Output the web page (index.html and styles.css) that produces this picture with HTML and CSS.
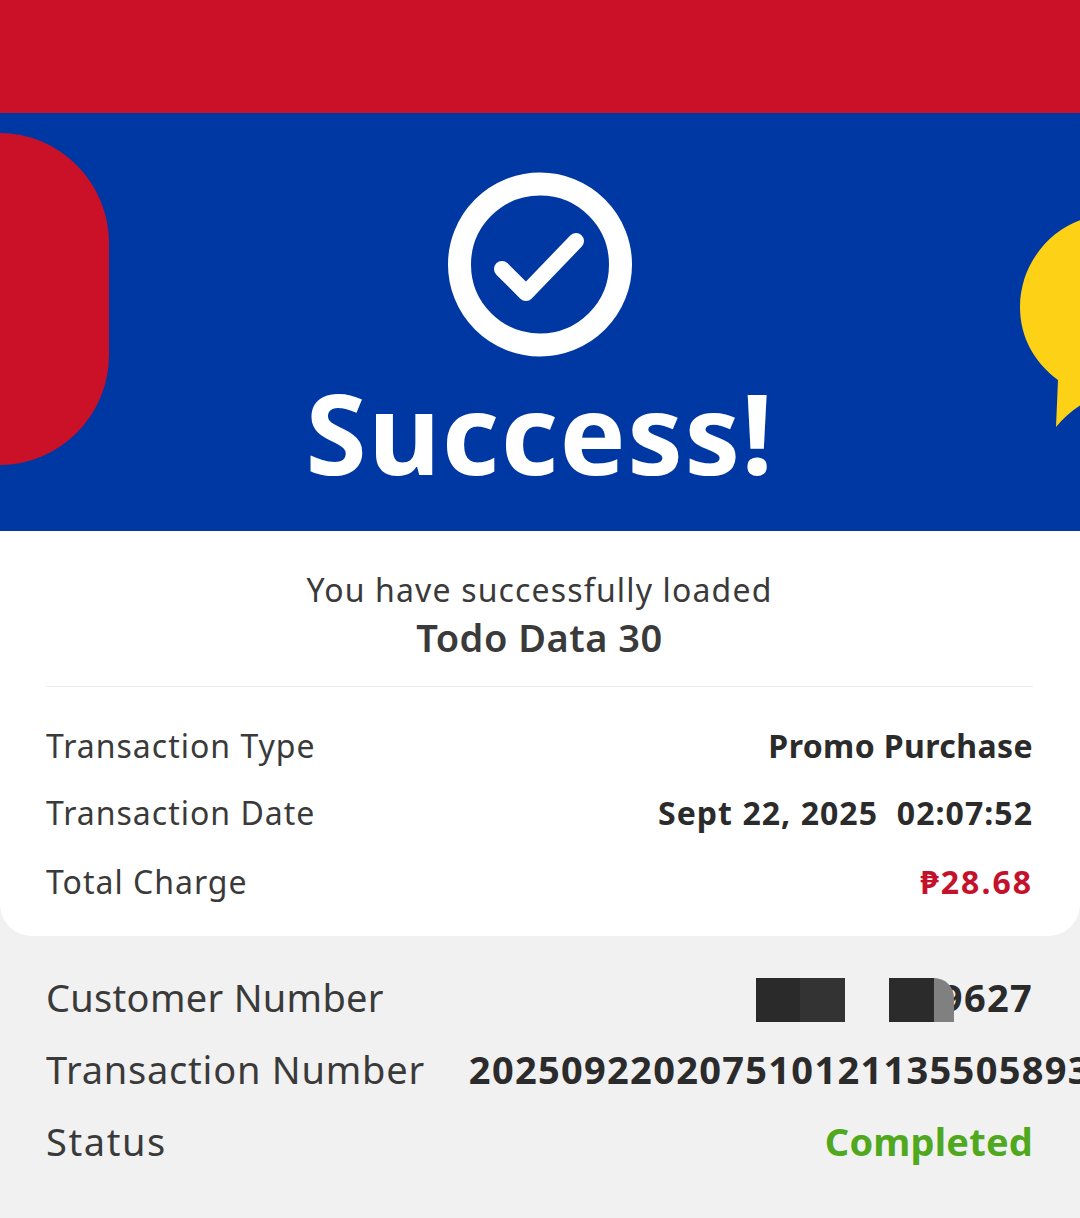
FILE: index.html
```html
<!DOCTYPE html>
<html lang="en">
<head>
    <meta charset="UTF-8">
    <meta name="viewport" content="width=device-width, initial-scale=1.0">
    <title>Success</title>
    <link rel="stylesheet" href="styles.css">
</head>
<body>
    <div class="top-bar"></div>
    <div class="hero">
        <div class="hero-red"></div>
        <svg class="hero-bubble" width="62" height="210" viewBox="0 0 62 210">
            <path d="M62 0C28 12 1 46 1 87c0 31 15 56 38 73l-2 47c7-8 15-16 25-22z" fill="#fdd116"/>
        </svg>
        <svg class="check-icon" width="186" height="186" viewBox="0 0 186 186">
            <circle cx="93" cy="92.5" r="80.5" fill="none" stroke="#fff" stroke-width="23"/>
            <path d="M55 97l24 24 50-52" fill="none" stroke="#fff" stroke-width="16" stroke-linecap="round" stroke-linejoin="round"/>
        </svg>
        <h1 class="hero-title">Success!</h1>
    </div>
    <div class="card">
        <p class="loaded-text">You have successfully loaded</p>
        <p class="promo-name">Todo Data 30</p>
        <div class="divider"></div>
        <div class="row row-first">
            <span class="label">Transaction Type</span>
            <span class="value">Promo Purchase</span>
        </div>
        <div class="row">
            <span class="label">Transaction Date</span>
            <span class="value value-date">Sept 22, 2025&nbsp; 02:07:52</span>
        </div>
        <div class="row row-last">
            <span class="label">Total Charge</span>
            <span class="value value-red">₱28.68</span>
        </div>
    </div>
    <div class="details">
        <div class="detail-row">
            <span class="detail-label label-customer">Customer Number</span>
            <span class="detail-value">9627</span>
            <div class="redact redact-one"></div>
            <div class="redact redact-two"></div>
            <div class="redact redact-tip"></div>
        </div>
        <div class="detail-row detail-row-long">
            <span class="detail-label">Transaction Number</span>
            <span class="detail-value">202509220207510121135505893</span>
        </div>
        <div class="detail-row">
            <span class="detail-label label-status">Status</span>
            <span class="detail-value value-green">Completed</span>
        </div>
    </div>
</body>
</html>
```

FILE: styles.css
```css
html, body {
    margin: 0;
    padding: 0;
    height: 100%;
    overflow: hidden;
}
body {
    font-family: "Noto Sans", Arial, sans-serif;
    background-color: #f1f1f1;
    color: #3a3a3a;
}
.top-bar {
    height: 113px;
    background-color: #cb1128;
}
.hero {
    position: relative;
    height: 418px;
    background-color: #0038a3;
    overflow: hidden;
    display: flex;
    flex-direction: column;
    align-items: center;
}
.hero-red {
    position: absolute;
    left: -120px;
    top: 20px;
    width: 229px;
    height: 332px;
    border-radius: 110px;
    background-color: #cb1128;
}
.hero-bubble {
    position: absolute;
    left: 1019px;
    top: 107px;
}
.check-icon {
    margin-top: 59px;
    display: block;
}
.hero-title {
    margin: 14px 0 0;
    font-size: 111px;
    line-height: 120px;
    font-weight: 700;
    letter-spacing: 1.5px;
    color: #fff;
}
.card {
    background-color: #fff;
    height: 405px;
    padding: 0 47px 0 46px;
    border-radius: 0 0 32px 32px;
    display: flex;
    flex-direction: column;
}
.loaded-text {
    margin: 37px 0 0;
    text-align: center;
    font-size: 32px;
    line-height: 44px;
    letter-spacing: 1.15px;
}
.promo-name {
    margin: 1px 0 0;
    text-align: center;
    font-size: 38px;
    line-height: 48px;
    font-weight: 600;
    letter-spacing: 0.5px;
}
.divider {
    margin-top: 25px;
    height: 1px;
    background-color: #ececec;
}
.row {
    display: flex;
    justify-content: space-between;
    align-items: center;
    height: 44px;
    margin-top: 23px;
    font-size: 32px;
    letter-spacing: 1px;
}
.row-first {
    margin-top: 36px;
}
.row-last {
    margin-top: 25px;
}
.value {
    font-weight: 700;
    color: #2b2b2b;
    letter-spacing: 0.4px;
}
.value-date {
    letter-spacing: 1.05px;
}
.value-red {
    color: #c5122c;
    letter-spacing: 2px;
}
.details {
    padding: 36px 47px 0 46px;
    display: flex;
    flex-direction: column;
    gap: 22px;
}
.detail-row {
    position: relative;
    display: flex;
    justify-content: space-between;
    align-items: center;
    height: 50px;
    font-size: 38px;
    white-space: nowrap;
}
.detail-row-long {
    justify-content: flex-start;
    gap: 44px;
}
.detail-label {
    letter-spacing: 0.77px;
}
.label-customer {
    letter-spacing: 0.3px;
}
.label-status {
    letter-spacing: 1.6px;
}
.detail-value {
    font-weight: 700;
    color: #2b2b2b;
    letter-spacing: 1.3px;
}
.detail-row .value-green {
    color: #4fa81e;
    letter-spacing: 0.2px;
}
.redact {
    position: absolute;
    top: 6px;
    height: 44px;
}
.redact-one {
    left: 710px;
    width: 89px;
    background: linear-gradient(90deg, #2a2a2a 50%, #333 50%);
}
.redact-two {
    left: 843px;
    width: 45px;
    background-color: #2b2b2b;
}
.redact-tip {
    left: 888px;
    width: 20px;
    background-color: #808080;
    border-radius: 0 20px 0 0;
}
```
